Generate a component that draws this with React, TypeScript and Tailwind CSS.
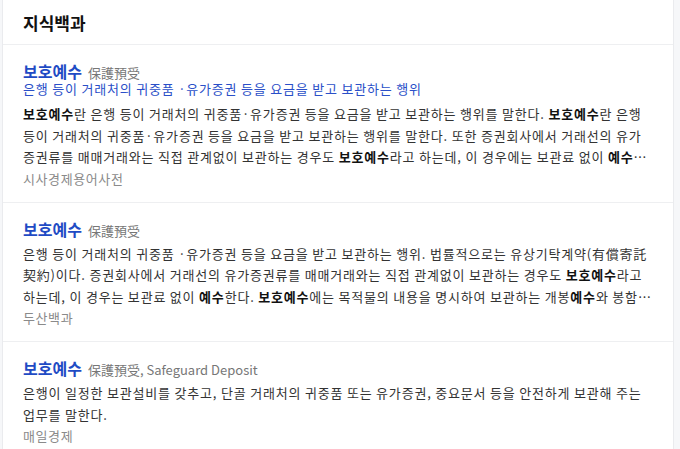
import React from "react";

const font = { fontFamily: '"Noto Sans CJK KR", "Noto Sans", sans-serif' };

function Item({
  hanja,
  latin,
  sub,
  children,
  source,
  last,
}: {
  hanja: string;
  latin?: string;
  sub?: string;
  children: React.ReactNode;
  source: string;
  last?: boolean;
}) {
  return (
    <div className={`px-5 pt-[17px] pb-[12px] ${last ? "" : "border-b border-[#eeeff1]"}`}>
      <div className="flex items-baseline gap-[6px] leading-[18px]">
        <span className="text-[16px] font-bold text-[#1f4bc4]">보호예수</span>
        <span className="text-[13px] text-[#777]">
          {hanja}
          {latin && <span>, {latin}</span>}
        </span>
      </div>
      {sub && (
        <div className="text-[13px] leading-[14px] text-[#2a4fc8] tracking-[0.8px]">{sub}</div>
      )}
      <div
        className={`${sub ? "mt-[7px]" : "mt-[3px]"} text-[13px] leading-[21.5px] text-[#333] line-clamp-3 tracking-[0.8px]`}
      >
        {children}
      </div>
      <div className="text-[13px] leading-[22px] text-[#8a8a8a] tracking-[0.6px]">{source}</div>
    </div>
  );
}

export default function App() {
  const b = (t: string) => <b className="font-bold text-[#111]">{t}</b>;
  return (
    <div className="w-[680px] h-[449px] bg-[#f6f7f9] overflow-hidden" style={font}>
      <div className="ml-[2px] w-[672px] h-full bg-white border-x border-[#eaebee]">
        <div className="h-[45px] px-5 flex items-center border-b border-[#eeeff1]">
          <h2 className="text-[17px] font-bold text-[#111] leading-none">지식백과</h2>
        </div>
        <Item
          hanja="保護預受"
          sub="은행 등이 거래처의 귀중품 ·유가증권 등을 요금을 받고 보관하는 행위"
          source="시사경제용어사전"
        >
          {b("보호예수")}란 은행 등이 거래처의 귀중품·유가증권 등을 요금을 받고 보관하는 행위를 말한다. {b("보호예수")}란 은행 등이 거래처의 귀중품·유가증권 등을 요금을 받고 보관하는 행위를 말한다. 또한 증권회사에서 거래선의 유가증권류를 매매거래와는 직접 관계없이 보관하는 경우도 {b("보호예수")}라고 하는데, 이 경우에는 보관료 없이 {b("예수")}한다. 보호예수는 일반적으로 개봉예수와 봉함예수로 구분된다.
        </Item>
        <Item hanja="保護預受" source="두산백과">
          은행 등이 거래처의 귀중품 ·유가증권 등을 요금을 받고 보관하는 행위. 법률적으로는 유상기탁계약(有償寄託契約)이다. 증권회사에서 거래선의 유가증권류를 매매거래와는 직접 관계없이 보관하는 경우도 {b("보호예수")}라고 하는데, 이 경우는 보관료 없이 {b("예수")}한다. {b("보호예수")}에는 목적물의 내용을 명시하여 보관하는 개봉{b("예수")}와 봉함{b("예수")}가 있다.
        </Item>
        <Item hanja="保護預受" latin="Safeguard Deposit" source="매일경제" last>
          은행이 일정한 보관설비를 갖추고, 단골 거래처의 귀중품 또는 유가증권, 중요문서 등을 안전하게 보관해 주는 업무를 말한다.
        </Item>
      </div>
    </div>
  );
}
